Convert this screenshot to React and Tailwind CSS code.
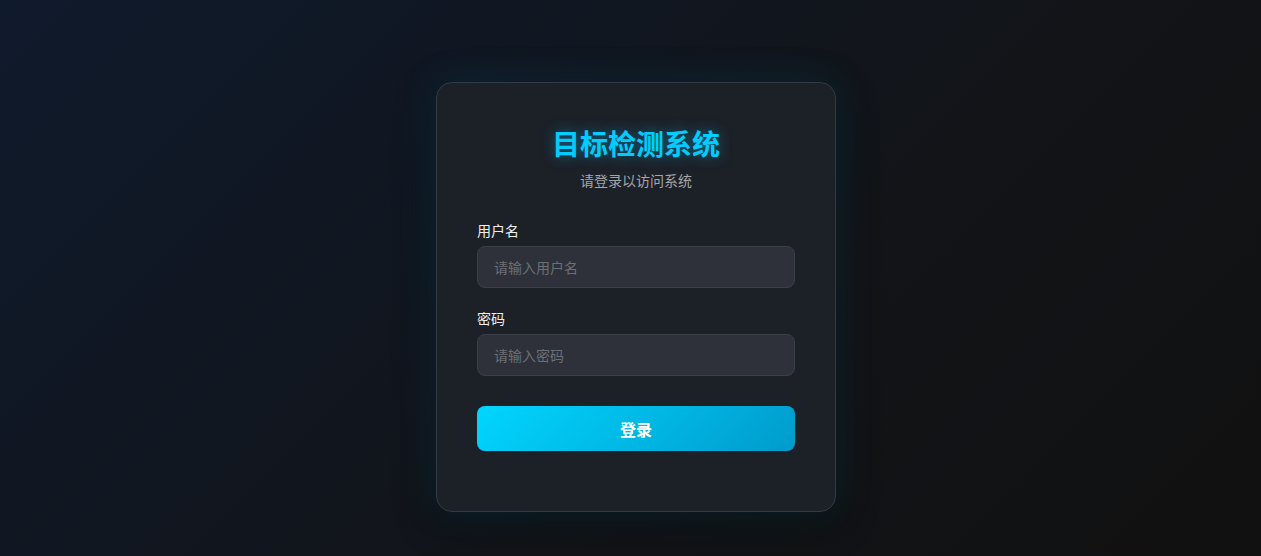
export default function App() {
  const font = { fontFamily: '"Noto Sans CJK SC", "Noto Sans", sans-serif' };
  return (
    <div
      className="min-h-screen w-full bg-[linear-gradient(135deg,#0f1a2c_0%,#121418_60%,#111111_100%)] flex justify-center items-start pt-[82px] pb-[44px] pl-[11px]"
      style={font}
    >
      <div className="w-[400px] rounded-2xl border border-[#343944] bg-[#1e2128]/95 px-10 pt-10 pb-10 shadow-[0_0_40px_rgba(0,200,255,0.12),0_10px_40px_rgba(0,0,0,0.45)]">
        <div className="text-center">
          <h1 className="text-[28px] leading-[40px] font-bold text-[#00ccff] [text-shadow:0_0_14px_rgba(0,200,255,0.45)]">
            目标检测系统
          </h1>
          <p className="mt-[7px] text-sm leading-[21px] text-[#a3a6ab]">请登录以访问系统</p>
        </div>

        <form className="mt-[29px]" onSubmit={(e) => e.preventDefault()}>
          <div className="mb-5">
            <label className="block text-sm leading-[21px] text-[#eeeeee] mb-[5px]">用户名</label>
            <input
              type="text"
              placeholder="请输入用户名"
              className="w-full h-[42px] rounded-lg border border-[#3b3f48] bg-[#2e3139] px-4 text-sm text-white placeholder:text-[#6c6f76] outline-none"
            />
          </div>
          <div className="mb-5">
            <label className="block text-sm leading-[21px] text-[#eeeeee] mb-[5px]">密码</label>
            <input
              type="password"
              placeholder="请输入密码"
              className="w-full h-[42px] rounded-lg border border-[#3b3f48] bg-[#2e3139] px-4 text-sm text-white placeholder:text-[#6c6f76] outline-none"
            />
          </div>
          <button
            type="submit"
            className="mt-[10px] w-full h-[45px] rounded-lg bg-[linear-gradient(135deg,#00d6ff,#009bcc)] text-base font-bold text-white"
          >
            登录
          </button>
          <div className="h-5" />
        </form>
      </div>
    </div>
  );
}
